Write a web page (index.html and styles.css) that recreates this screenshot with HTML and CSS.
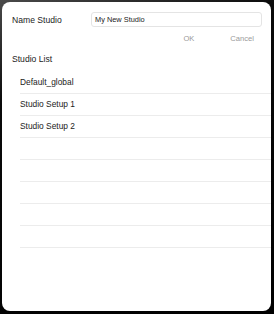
FILE: index.html
```html
<!DOCTYPE html>
<html>
<head>
<meta charset="utf-8">
<link rel="stylesheet" href="styles.css">
</head>
<body>
<div class="panel">
  <div class="head">
    <div class="name-row">
      <span class="label">Name Studio</span>
      <div class="input">My New Studio</div>
    </div>
    <div class="actions">
      <span class="btn">OK</span>
      <span class="btn">Cancel</span>
    </div>
    <div class="section">Studio List</div>
  </div>
  <ul class="list">
    <li>Default_global</li>
    <li>Studio Setup 1</li>
    <li>Studio Setup 2</li>
    <li></li>
    <li></li>
    <li></li>
    <li></li>
    <li></li>
  </ul>
</div>
</body>
</html>
```
FILE: styles.css
```css
html, body {
  margin: 0;
  padding: 0;
}
body {
  width: 274px;
  height: 314px;
  background: linear-gradient(160deg, #4a4a4a 0%, #0a0a0a 25%, #000 100%);
  font-family: "Liberation Sans", Arial, sans-serif;
  color: #222;
  overflow: hidden;
}
.panel {
  box-sizing: border-box;
  margin: 2px 0 0 2px;
  width: 269px;
  height: 309px;
  background: #fff;
  border-radius: 8px;
}
.head {
  padding: 10px 9px 0 10px;
}
.name-row {
  display: flex;
  align-items: center;
  height: 15px;
}
.label {
  width: 79px;
  font-size: 8.6px;
}
.input {
  box-sizing: border-box;
  flex: 1;
  height: 15px;
  border: 1px solid #e4e4e4;
  border-radius: 3px;
  padding-left: 3px;
  font-size: 7.4px;
  line-height: 13px;
  color: #222;
}
.actions {
  display: flex;
  justify-content: flex-end;
  gap: 36px;
  margin-top: 4px;
  padding-right: 8px;
  height: 16px;
  line-height: 16px;
  font-size: 7.6px;
  color: #9a9a9a;
}
.section {
  margin-top: 4px;
  height: 16px;
  line-height: 16px;
  font-size: 8.6px;
}
.list {
  list-style: none;
  margin: 5px 0 0 18px;
  padding: 0;
}
.list li {
  height: 21px;
  line-height: 21px;
  border-bottom: 1px solid #ececec;
  font-size: 8.4px;
}
```
